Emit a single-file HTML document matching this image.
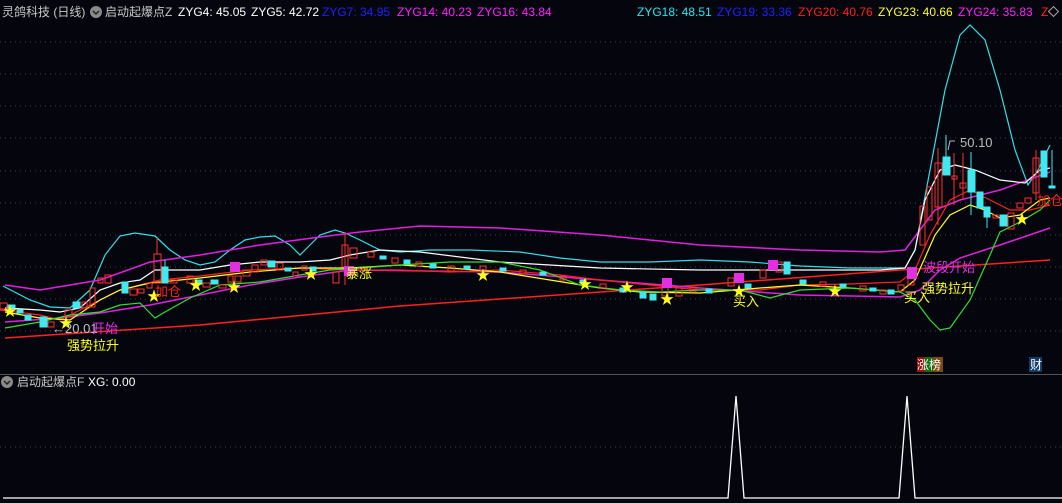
<!DOCTYPE html>
<html><head><meta charset="utf-8"><style>
html,body{margin:0;padding:0;background:#05060d;width:1062px;height:503px;overflow:hidden;font-family:"Liberation Sans","Noto Sans CJK SC",sans-serif}
svg{position:absolute;left:0;top:0}
.t{position:absolute;font-size:13px;white-space:nowrap;line-height:15px}
.h{font-size:12px}
</style></head><body>
<svg width="1062" height="503" viewBox="0 0 1062 503">
<g stroke="#3a3f48" stroke-dasharray="1 4" stroke-width="1">
<line x1="0" y1="42" x2="1062" y2="42"/><line x1="0" y1="74" x2="1062" y2="74"/><line x1="0" y1="106" x2="1062" y2="106"/><line x1="0" y1="138" x2="1062" y2="138"/><line x1="0" y1="171" x2="1062" y2="171"/><line x1="0" y1="203" x2="1062" y2="203"/><line x1="0" y1="235" x2="1062" y2="235"/><line x1="0" y1="267" x2="1062" y2="267"/><line x1="0" y1="299" x2="1062" y2="299"/><line x1="0" y1="331" x2="1062" y2="331"/><line x1="0" y1="447" x2="1062" y2="447"/>
</g>
<line x1="0" y1="374.5" x2="1062" y2="374.5" stroke="#555" />
<g fill="none" stroke-width="1.2">
<polyline stroke="#ff2020" stroke-width="1.5" points="5,338 200,325 400,306 700,285 900,270 1050,260"/>
<polyline stroke="#30e0e8" points="3,286 30,300 50,307 70,308 90,290 105,255 120,236 135,233 155,236 170,250 185,260 200,265 215,262 230,250 245,240 260,237 275,236 290,245 300,255 310,245 320,235 335,230 345,233 360,240 380,250 400,252 430,250 470,250 520,252 560,258 600,262 650,262 700,260 750,262 800,266 850,268 905,268 915,250 930,170 945,90 960,35 970,25 985,40 1000,90 1015,150 1028,185 1038,170 1050,145"/>
<polyline stroke="#e020e0" stroke-width="1.5" points="5,285 40,290 100,280 150,262 200,255 260,245 320,237 360,232 420,226 500,228 600,235 700,245 800,250 880,252 905,250 920,230 935,210 960,200 1000,190 1050,172"/>
<polyline stroke="#e020e0" stroke-width="1.5" points="5,322 60,318 100,313 150,305 200,295 250,285 300,277 350,270 500,272 600,280 700,288 800,295 900,297 920,290 940,270 960,258 1000,245 1050,228"/>
<polyline stroke="#ffffff" points="5,308 40,310 60,312 80,308 100,290 120,283 140,280 155,270 170,270 200,270 230,265 260,262 300,262 330,260 350,255 380,250 420,252 500,262 600,268 700,270 800,270 880,270 905,268 915,250 925,200 940,170 955,165 975,170 1000,180 1025,183 1040,170 1050,168"/>
<polyline stroke="#ff2020" points="0,310 40,315 60,320 100,300 120,290 160,280 200,276 250,270 300,268 350,270 400,270 450,272 500,270 560,275 600,280 650,285 700,290 760,290 800,285 850,284 900,282 915,270 930,235 950,200 970,190 990,200 1010,210 1030,210 1050,205"/>
<polyline stroke="#ffff20" points="5,312 40,318 70,320 100,300 120,290 150,283 200,278 250,272 300,268 350,268 400,265 450,268 500,272 550,280 600,288 640,292 700,293 760,288 800,285 850,288 900,292 915,280 935,235 950,215 970,205 985,210 1000,218 1020,215 1040,200 1050,198"/>
<polyline stroke="#30e030" points="5,328 40,322 70,315 100,312 120,305 140,303 155,318 165,312 190,298 220,285 260,282 300,275 330,270 360,268 400,265 450,262 500,262 540,270 580,285 620,290 660,292 700,290 740,290 770,298 800,290 850,288 900,292 915,300 930,320 940,330 950,328 970,300 990,255 1000,232 1020,222 1040,210 1050,200"/>
</g>
<g stroke="#ff3030" fill="none" stroke-width="1">
<rect x="0" y="303" width="7" height="6"/><rect x="48" y="322" width="6" height="5"/><rect x="65" y="310" width="7" height="7"/><rect x="82" y="302" width="5" height="6"/><rect x="90" y="288" width="5" height="19"/><rect x="98" y="278" width="5" height="5"/><rect x="105" y="275" width="6" height="8"/><rect x="130" y="289" width="7" height="6"/><rect x="138" y="289" width="6" height="4"/><rect x="147" y="283" width="5" height="5"/><rect x="154" y="254" width="7" height="29"/><line x1="157" y1="238" x2="157" y2="254"/><rect x="170" y="280" width="7" height="3"/><rect x="187" y="276" width="6" height="7"/><rect x="203" y="283" width="7" height="4"/><rect x="219" y="285" width="7" height="3"/><rect x="228" y="276" width="5" height="6"/><rect x="235" y="276" width="6" height="6"/><rect x="243" y="270" width="7" height="6"/><rect x="252" y="265" width="6" height="7"/><rect x="261" y="260" width="6" height="5"/><rect x="277" y="263" width="6" height="7"/><rect x="293" y="272" width="5" height="4"/><rect x="302" y="266" width="5" height="4"/><rect x="333" y="272" width="6" height="11"/><rect x="342" y="245" width="6" height="22"/><line x1="345" y1="232" x2="345" y2="285"/><rect x="350" y="248" width="7" height="10"/>
<rect x="368" y="252" width="6" height="5"/><rect x="392" y="258" width="6" height="5"/><rect x="416" y="262" width="6" height="4"/><rect x="448" y="266" width="6" height="5"/><rect x="480" y="266" width="6" height="4"/><rect x="520" y="270" width="6" height="4"/><rect x="560" y="276" width="6" height="4"/><rect x="600" y="284" width="6" height="4"/><rect x="662" y="284" width="6" height="12"/><rect x="676" y="288" width="6" height="8"/><rect x="690" y="287" width="6" height="5"/><rect x="728" y="278" width="6" height="8"/><rect x="760" y="270" width="6" height="8"/><rect x="776" y="262" width="6" height="10"/><rect x="820" y="282" width="6" height="4"/><rect x="860" y="286" width="6" height="5"/><rect x="880" y="290" width="6" height="4"/><rect x="898" y="285" width="6" height="6"/><rect x="908" y="270" width="6" height="15"/>
<rect x="920" y="206" width="5" height="39"/><rect x="927" y="187" width="5" height="33"/><rect x="935" y="163" width="7" height="44"/><line x1="938" y1="148" x2="938" y2="225"/><rect x="952" y="176" width="5" height="3"/><line x1="954" y1="153" x2="954" y2="205"/><rect x="960" y="183" width="6" height="5"/><line x1="963" y1="153" x2="963" y2="200"/><rect x="993" y="215" width="5" height="3"/><rect x="1008" y="213" width="6" height="16"/><rect x="1017" y="203" width="6" height="5"/><rect x="1025" y="198" width="6" height="5"/><rect x="1033" y="158" width="6" height="35"/><line x1="1036" y1="150" x2="1036" y2="200"/>
</g>
<g fill="#40e8f0" stroke="#40e8f0">
<rect x="8" y="305" width="7" height="3"/><rect x="17" y="310" width="6" height="3"/><rect x="25" y="315" width="6" height="5"/><rect x="40" y="317" width="7" height="10"/><rect x="73" y="302" width="7" height="6"/><rect x="122" y="282" width="6" height="11"/><rect x="162" y="267" width="6" height="16"/><line x1="165" y1="260" x2="165" y2="267"/><rect x="195" y="280" width="7" height="4"/><rect x="211" y="280" width="7" height="4"/><rect x="268" y="261" width="7" height="6"/><rect x="285" y="268" width="6" height="3"/><rect x="310" y="267" width="6" height="4"/>
<rect x="380" y="256" width="6" height="3"/><rect x="404" y="260" width="6" height="4"/><rect x="430" y="264" width="6" height="4"/><rect x="464" y="266" width="6" height="3"/><rect x="500" y="268" width="6" height="3"/><rect x="540" y="272" width="6" height="3"/><rect x="580" y="280" width="6" height="3"/><rect x="620" y="288" width="6" height="4"/><rect x="640" y="292" width="6" height="6"/><rect x="650" y="294" width="6" height="6"/><rect x="706" y="289" width="6" height="4"/><rect x="745" y="284" width="6" height="4"/><rect x="784" y="262" width="6" height="12"/><rect x="800" y="280" width="6" height="4"/><rect x="840" y="284" width="6" height="3"/><rect x="870" y="288" width="6" height="3"/><rect x="888" y="290" width="6" height="4"/>
<rect x="943" y="157" width="7" height="18"/><line x1="946" y1="135" x2="946" y2="157"/><rect x="968" y="170" width="7" height="22"/><line x1="971" y1="152" x2="971" y2="215"/><rect x="977" y="192" width="6" height="16"/><rect x="984" y="207" width="6" height="10"/><line x1="987" y1="217" x2="987" y2="228"/><rect x="1000" y="215" width="7" height="11"/><rect x="1041" y="151" width="6" height="26"/><rect x="1049" y="186" width="6" height="2"/><line x1="1052" y1="150" x2="1052" y2="186"/>
</g>
<g fill="#ffff20" font-size="14">
<text x="3" y="316">★</text><text x="59" y="328">★</text><text x="147" y="301">★</text><text x="189" y="290">★</text><text x="227" y="292">★</text><text x="304" y="279">★</text><text x="476" y="280">★</text><text x="578" y="289">★</text><text x="620" y="292">★</text><text x="660" y="304">★</text><text x="732" y="296">★</text><text x="828" y="296">★</text><text x="1015" y="224">★</text>
</g>
<g fill="#e030e0"><rect x="230" y="262" width="10" height="10"/><rect x="344" y="266" width="10" height="10"/><rect x="662" y="278" width="10" height="10"/><rect x="734" y="273" width="10" height="10"/><rect x="768" y="260" width="10" height="10"/><rect x="907" y="267" width="10" height="12"/></g>
<polyline fill="none" stroke="#ffffff" stroke-width="1.3" points="3,498 728,498 736,396 744,498 899,498 907,396 915,498 1062,498"/>
<rect x="917" y="357" width="8" height="15" fill="#9a1010"/><rect x="925" y="357" width="8" height="15" fill="#107010"/><rect x="933" y="357" width="10" height="15" fill="#7a4a10"/>
<rect x="1029" y="357" width="13" height="15" fill="#103a6a"/>
<circle cx="96" cy="12" r="6" fill="#8a8a8a"/><polyline points="93,11 96,14 99,11" fill="none" stroke="#222" stroke-width="1.5"/>
<circle cx="7" cy="382" r="6" fill="#8a8a8a"/><polyline points="4,381 7,384 10,381" fill="none" stroke="#222" stroke-width="1.5"/>
<rect x="1050" y="8" width="7" height="7" transform="rotate(45 1053.5 11.5)" fill="none" stroke="#aaa"/>
<polyline points="948,150 950,141 955,141" fill="none" stroke="#bbb"/>
</svg>
<div class="t h" style="left:2px;top:5px;color:#c8c8c8">灵鸽科技 (日线)</div>
<div class="t h" style="left:105px;top:5px;color:#c8c8c8">启动起爆点Z</div>
<div class="t h" style="left:178px;top:5px;color:#fff">ZYG4: 45.05</div>
<div class="t h" style="left:251px;top:5px;color:#fff">ZYG5: 42.72</div>
<div class="t h" style="left:322px;top:5px;color:#2020ff">ZYG7: 34.95</div>
<div class="t h" style="left:397px;top:5px;color:#ff20ff">ZYG14: 40.23</div>
<div class="t h" style="left:477px;top:5px;color:#ff20ff">ZYG16: 43.84</div>
<div class="t h" style="left:637px;top:5px;color:#20e8f0">ZYG18: 48.51</div>
<div class="t h" style="left:717px;top:5px;color:#2020ff">ZYG19: 33.36</div>
<div class="t h" style="left:798px;top:5px;color:#ff2020">ZYG20: 40.76</div>
<div class="t h" style="left:878px;top:5px;color:#ffff20">ZYG23: 40.66</div>
<div class="t h" style="left:958px;top:5px;color:#ff20ff">ZYG24: 35.83</div>
<div class="t h" style="left:1041px;top:5px;color:#ff2020">Z</div>
<div class="t h" style="left:17px;top:375px;color:#c8c8c8">启动起爆点F</div>
<div class="t h" style="left:88px;top:375px;color:#fff">XG: 0.00</div>
<div class="t" style="left:52px;top:321px;color:#c0c0d0">←20.01</div>
<div class="t" style="left:92px;top:321px;color:#e030e0">开始</div>
<div class="t" style="left:67px;top:338px;color:#ffff20">强势拉升</div>
<div class="t" style="left:155px;top:284px;color:#ff2020">加仓</div>
<div class="t" style="left:346px;top:266px;color:#ffff20">暴涨</div>
<div class="t" style="left:733px;top:294px;color:#ffff20">买入</div>
<div class="t" style="left:904px;top:290px;color:#ffff20">买入</div>
<div class="t" style="left:923px;top:260px;color:#e030e0">波段开始</div>
<div class="t" style="left:922px;top:281px;color:#ffff20">强势拉升</div>
<div class="t" style="left:960px;top:135px;color:#bbb">50.10</div>
<div class="t" style="left:1037px;top:193px;color:#ff2020">加仓</div>
<div class="t" style="left:917px;top:358px;color:#fff;font-size:12px">涨榜</div>
<div class="t" style="left:1030px;top:358px;color:#fff;font-size:12px">财</div>
</body></html>
